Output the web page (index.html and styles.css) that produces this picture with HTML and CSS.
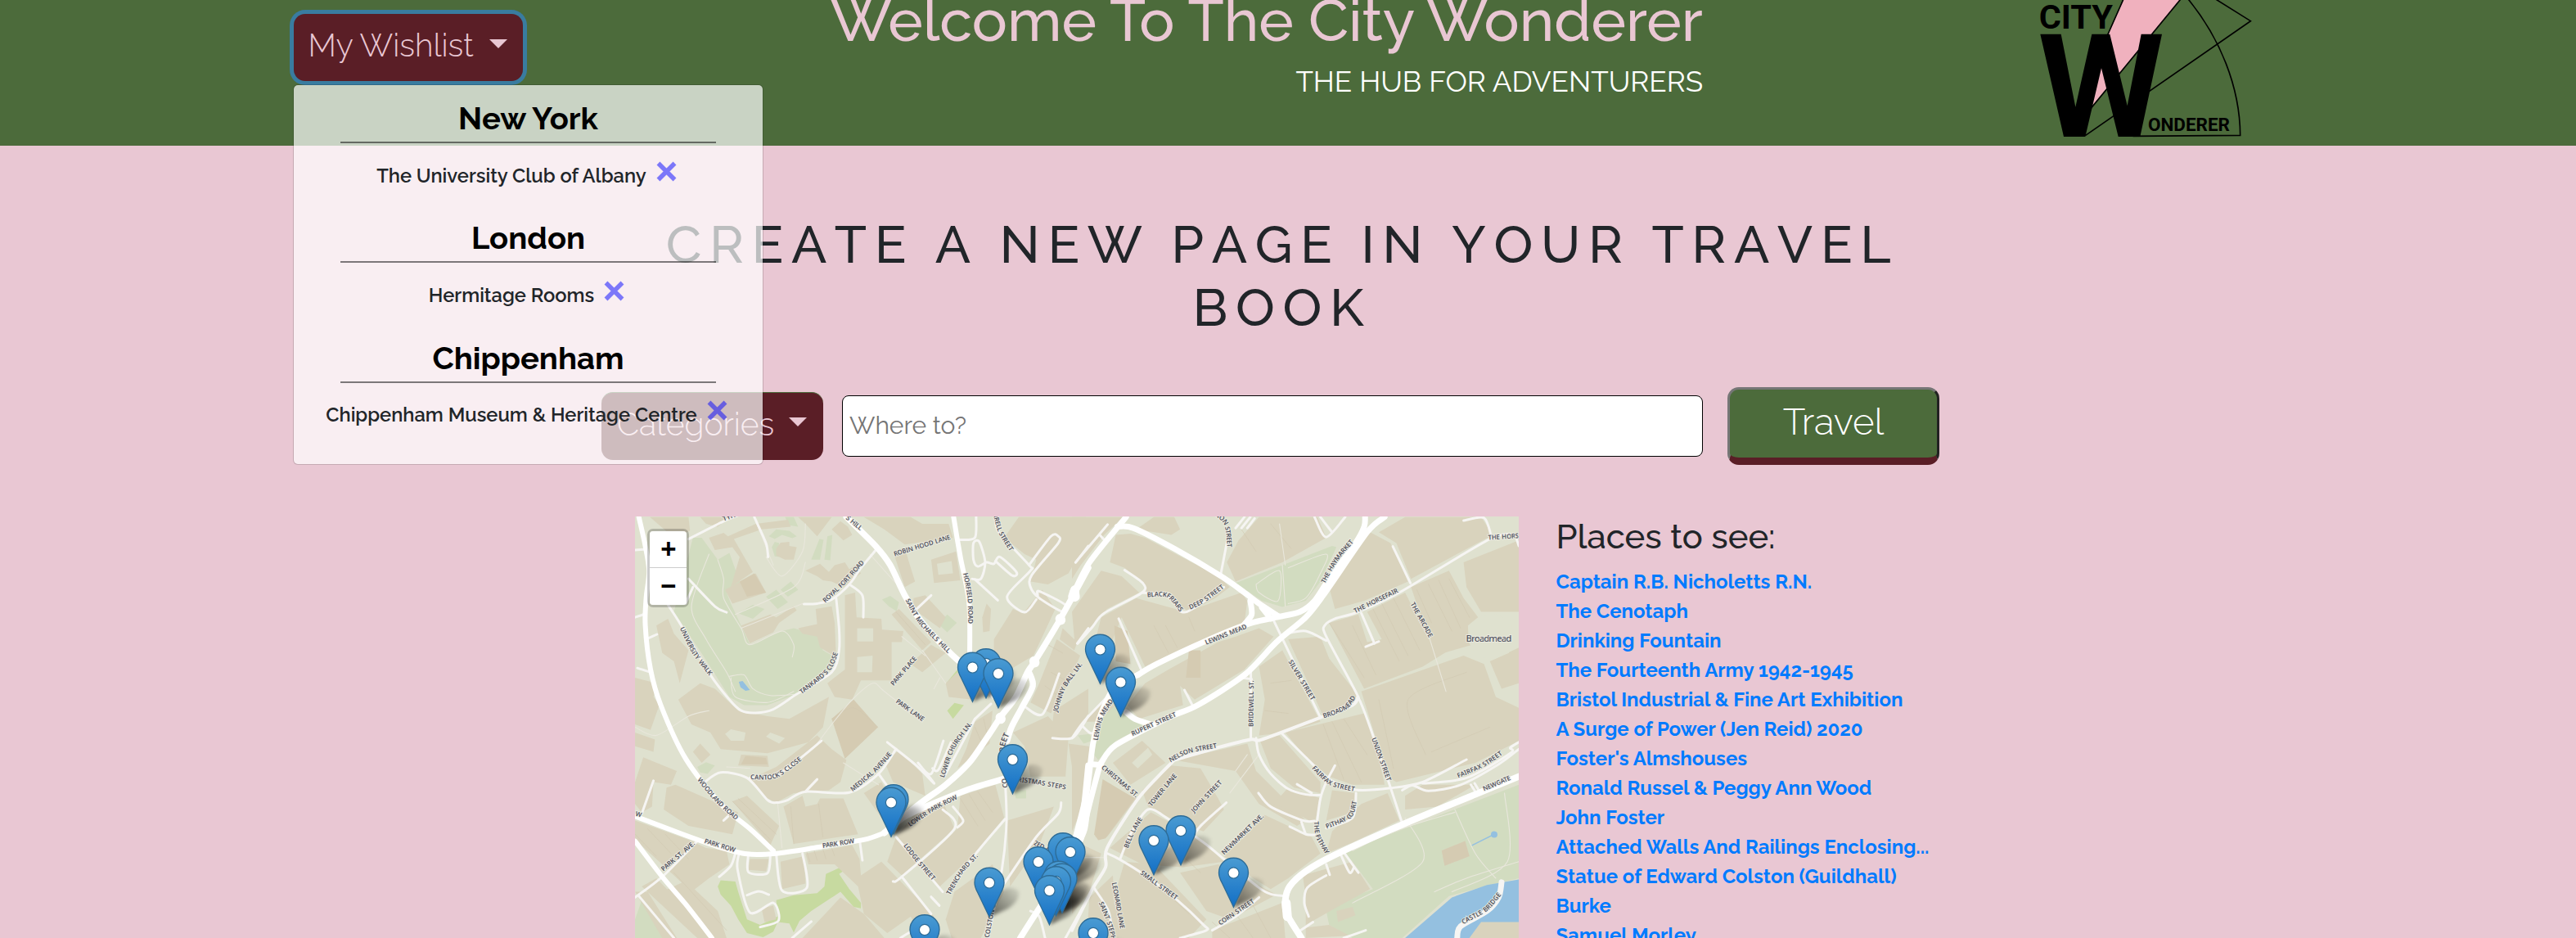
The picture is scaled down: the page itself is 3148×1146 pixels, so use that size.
FILE: index.html
```html
<!DOCTYPE html>
<html lang="en">
<head>
<meta charset="utf-8">
<title>The City Wonderer</title>
<link rel="stylesheet" href="styles.css">
</head>
<body>
<header class="header">
  <div class="wishlist">
    <button class="btn btn-focus">My Wishlist<span class="caret"></span></button>
    <div class="menu">
      <section class="city"><h2>New York</h2><p>The University Club of Albany<svg class="remove" viewBox="0 0 25 25"><path d="M2.5 2.5l20 20M22.5 2.5l-20 20"/></svg></p></section>
      <section class="city"><h2>London</h2><p>Hermitage Rooms<svg class="remove" viewBox="0 0 25 25"><path d="M2.5 2.5l20 20M22.5 2.5l-20 20"/></svg></p></section>
      <section class="city"><h2>Chippenham</h2><p>Chippenham Museum &amp; Heritage Centre<svg class="remove" viewBox="0 0 25 25"><path d="M2.5 2.5l20 20M22.5 2.5l-20 20"/></svg></p></section>
    </div>
  </div>
  <div class="brand">
    <h1>Welcome To The City Wonderer</h1>
    <p>THE HUB FOR ADVENTURERS</p>
  </div>
  <svg class="logo" viewBox="0 0 1020 534">
    <path class="beam" d="M468-10L408 130 340 400 680-10z"/>
    <path class="line" d="M468-10L405 132M682-12L340 404M795-8L931 77 325 497M700-6C820 140 892 320 893 496L500 499"/>
    <path d="M160 125H236L289 392 349 125H415L479 388 530 125H606L526 501H446L384 250 325 501H246z"/>
    <text class="logo-city" x="155" y="106" textLength="271" lengthAdjust="spacingAndGlyphs">CITY</text>
    <text class="logo-rest" x="555" y="479" textLength="300" lengthAdjust="spacingAndGlyphs">ONDERER</text>
  </svg>
</header>
<main>
  <h2 class="title">CREATE A NEW PAGE IN YOUR TRAVEL BOOK</h2>
  <form class="search">
    <button type="button" class="btn btn-cat">Categories<span class="caret"></span></button>
    <input class="where" type="text" placeholder="Where to?">
    <button type="button" class="travel">Travel</button>
  </form>
  <div class="results">
    <div class="map">
      <svg class="tiles" viewBox="0 0 1080 515" width="1080" height="515"></svg>
      <div class="zoom"><span>+</span><span>−</span></div>
    </div>
    <aside class="places">
      <h3>Places to see:</h3>
      <ul>
        <li><a>Captain R.B. Nicholetts R.N.</a></li>
        <li><a>The Cenotaph</a></li>
        <li><a>Drinking Fountain</a></li>
        <li><a>The Fourteenth Army 1942-1945</a></li>
        <li><a>Bristol Industrial &amp; Fine Art Exhibition</a></li>
        <li><a>A Surge of Power (Jen Reid) 2020</a></li>
        <li><a>Foster's Almshouses</a></li>
        <li><a>Ronald Russel &amp; Peggy Ann Wood</a></li>
        <li><a>John Foster</a></li>
        <li><a>Attached Walls And Railings Enclosing...</a></li>
        <li><a>Statue of Edward Colston (Guildhall)</a></li>
        <li><a>Burke</a></li>
        <li><a>Samuel Morley</a></li>
      </ul>
    </aside>
  </div>
</main>
<script src="map.js"></script>
</body>
</html>
```
FILE: styles.css
```css
* { box-sizing: border-box; }
body {
  margin: 0;
  height: 1146px;
  overflow: hidden;
  background: #e9c7d3;
  color: #212529;
  font-family: Raleway, Lato, sans-serif;
}
h1, h2, h3, p, ul { margin: 0; padding: 0; font-weight: 500; }
ul { list-style: none; }

.header {
  display: grid;
  grid-template-columns: 700px 1381px 359px 340px;
  height: 178px;
  background: #4c6b3b;
}
.wishlist { position: relative; padding: 17px 0 0 359px; }
.btn {
  display: flex;
  align-items: center;
  border: 0;
  border-radius: 14px;
  background: #5a1e26;
  color: #e9c7d3;
  font: 300 39px Raleway, Lato, sans-serif;
  white-space: nowrap;
}
.btn-focus {
  width: 280px;
  height: 82px;
  padding: 0 0 6px 17.5px;
  box-shadow: 0 0 0 5px #397ca0;
}
.caret {
  margin: -4px 0 0 19px;
  border: 11px solid transparent;
  border-top-color: #e9c7d3;
  border-bottom: 0;
}
.menu {
  position: absolute;
  z-index: 5;
  top: 103px;
  left: 358px;
  width: 575px;
  height: 465px;
  padding: 18px 57px 0;
  border: 1px solid rgba(0, 0, 0, .15);
  border-radius: 6px;
  background: rgba(255, 255, 255, .7);
  background-clip: padding-box;
}
.city { height: 146.3px; }
.city h2 {
  height: 53px;
  border-bottom: 2px solid rgba(0, 0, 0, .5);
  color: #000;
  font-size: 38.2px;
  font-weight: 700;
  line-height: 46px;
  text-align: center;
}
.city p {
  display: flex;
  justify-content: center;
  margin: 21.5px -50px 0;
  padding-right: 4px;
  font-size: 23.7px;
  font-weight: 600;
  line-height: 36px;
  white-space: nowrap;
}
.remove { width: 25px; height: 25px; margin-left: 12px; }
.remove path { stroke: rgba(0, 0, 255, .5); stroke-width: 5.5; fill: none; }

.brand { text-align: right; white-space: nowrap; }
.brand h1 { margin-top: -18px; color: #e9c7d3; font-size: 72px; line-height: 86px; }
.brand p { margin-top: 5px; color: #fff; font-size: 35.2px; font-weight: 400; line-height: 53px; }

.logo { grid-column: 4; width: 340px; height: 178px; }
.logo .beam { fill: #f0b1be; }
.logo .line { fill: none; stroke: #000; stroke-width: 5; }
.logo text { font-family: Roboto, sans-serif; font-weight: 700; }
.logo-city { font-size: 124px; }
.logo-rest { font-size: 66px; }

.title {
  width: 1640px;
  margin: 81.6px 0 0 747px;
  font-size: 64px;
  font-kerning: none;
  line-height: 77px;
  letter-spacing: 9.6px;
  text-align: center;
}
.search { display: flex; align-items: center; height: 95px; margin: 59.4px 0 0 735px; }
.btn-cat { width: 271px; height: 83px; padding: 0 0 6px 19px; border-top: 1px solid #4c6b3b; }
.btn-cat .caret { margin-left: 18px; }
.where {
  width: 1052px;
  height: 75px;
  margin: 0 30px 0 23px;
  padding: 0 8px 2px;
  border: 1px solid #000;
  border-radius: 8px;
  background: #fff;
  font: 400 30px Raleway, Lato, sans-serif;
}
.where::placeholder { color: #757575; }
.travel {
  width: 259px;
  height: 95px;
  padding: 0 0 4px;
  border: 3px solid;
  border-width: 3px 3px 9px;
  border-color: #767676 #222 #5a1e26 #767676;
  border-radius: 14px;
  background: #4c6b3b;
  color: #fff;
  font: 300 45.5px Raleway, Lato, sans-serif;
}

.results { display: flex; gap: 45.5px; margin: 63px 0 0 776px; }
.map { position: relative; width: 1080px; height: 515px; overflow: hidden; background: #dfe1cf; }
.tiles { display: block; }
.zoom {
  position: absolute;
  top: 15px;
  left: 15px;
  width: 51px;
  border: 3px solid rgba(0, 0, 0, .2);
  border-radius: 7px;
  background-clip: padding-box;
}
.zoom span {
  display: block;
  height: 45px;
  padding: 3px 0 0 1px;
  background: #fff;
  color: #000;
  font: 700 33px/43px "Liberation Mono", monospace;
  text-align: center;
}
.zoom span:first-child { border-bottom: 1px solid #ccc; border-radius: 4px 4px 0 0; }
.zoom span:last-child { border-radius: 0 0 4px 4px; }

.places h3 { margin-bottom: 12px; font-size: 41.8px; font-weight: 500; line-height: 50px; }
.places li { height: 36px; line-height: 36px; white-space: nowrap; }
.places a { color: #007bff; font-size: 23.95px; font-weight: 700; }

.building { fill: #d9d3bd; }
.landmark { fill: #d5cbb2; }
.plain { fill: #dfe1cf; }
.park { fill: #d2dcc0; }
.garden { fill: #c7daa0; }
.water { fill: #94c0e0; }
.road { fill: none; stroke: #fff; stroke-linecap: round; stroke-linejoin: round; }
.street { stroke: #f6f5f3; }
.path { stroke: #e9e7dc; }
.wall { stroke: #d0c8b0; }
.street-name {
  fill: #53545e;
  stroke: #eeede5;
  stroke-width: 2px;
  stroke-opacity: .8;
  paint-order: stroke;
  font: 600 8.6px "Noto Sans", "Open Sans", sans-serif;
  white-space: pre;
}
.district { font-size: 11.5px; font-weight: 500; }
```
FILE: map.js
```js
const svg = document.querySelector('.tiles');
const NS = 'http://www.w3.org/2000/svg';

// Each tile keeps its own grid; project() turns a grid point into map pixels.
const ORIGIN = { w: -6, e: 534 };
const project = (tile, text) => text.trim().split(/\s+/).map(p => {
  const [x, y] = p.split(',').map(Number);
  return [x / 2.8 + ORIGIN[tile], y / 2.981 - 11];
});

function add(name, attrs, parent = svg) {
  const el = document.createElementNS(NS, name);
  for (const key in attrs) el.setAttribute(key, attrs[key]);
  parent.appendChild(el);
  return el;
}
const n = v => v.toFixed(1);
function smooth(pts) {
  let d = `M${n(pts[0][0])} ${n(pts[0][1])}`;
  for (let i = 0; i < pts.length - 1; i++) {
    const a = pts[i - 1] || pts[i], b = pts[i], c = pts[i + 1], e = pts[i + 2] || c;
    const k = 7;
    d += `C${n(b[0] + (c[0] - a[0]) / k)} ${n(b[1] + (c[1] - a[1]) / k)} ${n(c[0] - (e[0] - b[0]) / k)} ${n(c[1] - (e[1] - b[1]) / k)} ${n(c[0])} ${n(c[1])}`;
  }
  return d;
}
const areas = (cls, tile, list) => list.forEach(s =>
  add('polygon', { class: cls, points: project(tile, s).map(p => p.map(n).join()).join(' ') }));
const lines = (cls, width, tile, list) => list.forEach(s =>
  add('path', { class: 'road ' + cls, d: smooth(project(tile, s)), 'stroke-width': width }));

areas('park', 'w', [
  '150,380 215,110 245,110 300,190 340,165 385,300 330,310 345,350 410,500 520,450 560,440 640,465 660,520 700,545 690,580 570,680 470,720 390,720 340,690 250,540',
  '475,105 500,80 545,85 570,105 555,112 520,100 495,115', '485,145 495,125 510,130 505,165 515,180 495,178',
  '620,190 648,115 662,118 650,190', '665,190 675,105 692,100 685,192', '370,385 420,355 460,370 420,405',
  '465,325 500,300 540,345 505,370', '515,300 550,270 575,300 540,325', '862,335 890,322 920,345 912,378 885,360',
  '1055,425 1085,390 1118,420 1085,455', '230,945 260,928 290,940 265,970 240,965', '890,1270 930,1235 975,1280 920,1320',
  '17,1500 40,1430 110,1500 130,1568 17,1568', '530,35 560,35 575,70 545,65', '1315,1030 1355,1030 1355,1060 1320,1060'
]);
areas('garden', 'w', [
  '300,1380 310,1358 360,1362 370,1400 385,1450 400,1500 445,1520 505,1490 500,1430 560,1412 640,1405 665,1380 670,1335 720,1310 775,1275 778,1290 715,1335 750,1390 790,1440 790,1460 765,1455 720,1400 620,1470 580,1505 560,1548 545,1515 505,1510 490,1545 455,1565 400,1550 370,1500 345,1450 310,1410',
  '1082,640 1120,590 1128,630', '1085,740 1110,712 1142,720 1120,750 1105,770'
]);
areas('building', 'w', [
  '68,35 200,35 205,85 150,110 95,60', '240,35 340,35 300,70 260,60',
  '270,110 320,92 335,105 430,60 540,45 550,70 450,80 355,115 420,235 345,290 375,180 350,145 290,155',
  '325,300 430,240 465,310 350,350', '500,150 515,128 545,125 545,140 570,145 560,190 530,190 500,175',
  '575,35 690,35 640,105 600,60', '690,80 720,50 745,70 760,100 730,120',
  '600,230 650,205 680,235 700,210 735,200 750,225 770,210 790,240 730,290 690,270 660,265 640,250',
  '380,430 480,390 500,400 560,360 570,375 510,420 490,455 410,495', '575,440 640,425 635,370 690,360 700,420 705,545 650,510 640,470 590,460',
  '735,320 770,310 775,400 860,405 862,445 935,450 930,490 895,490 895,630 790,630 760,700 700,690 675,640 735,590',
  '800,35 960,35 1000,60 1090,60 1105,110 940,135 870,80', '900,160 940,150 975,270 940,290',
  '1030,190 1115,160 1130,265 1040,275', '970,330 1010,320 1080,400 1060,440 970,370', '895,390 920,370 1030,490 1000,520',
  '1280,110 1330,35 1560,35 1568,110 1500,240 1430,280 1370,270 1390,190 1350,170',
  '1245,480 1310,370 1345,385 1410,300 1455,370 1380,540 1300,590 1245,530', '1205,400 1220,350 1235,370 1230,450 1208,455',
  '960,570 1030,500 1080,530 1000,600', '1080,640 1120,600 1170,700 1090,690',
  '17,620 90,640 80,690 100,720 70,810 17,790', '17,820 85,845 80,890 17,870', '90,430 130,405 150,460 200,520 170,640 150,560 110,530',
  '165,700 240,640 290,660 370,740 470,760 545,770 680,690 660,800 610,855 560,870 470,895 310,880 275,820 210,790',
  '215,890 240,860 275,900 245,930', '380,900 470,905 475,945 370,940',
  '410,990 500,945 640,830 690,880 740,920 720,1000 680,1030 560,1040 500,1075 470,1060',
  '45,910 160,960 140,1010 80,1000 75,1090 40,1110 17,1080 17,1000', '125,1020 155,1010 370,1110 350,1190 200,1160 115,1100',
  '350,1070 400,1050 510,1160 480,1230', '525,1090 590,1050 600,1090 640,1080 650,1060 730,1060 780,1190 560,1225',
  '800,1040 860,1000 910,1100 880,1160', '870,925 920,885 1000,970 1010,1050 900,1000',
  '17,1140 200,1210 260,1240 330,1250 340,1300 270,1350 210,1400 100,1290 17,1210',
  '110,1400 190,1360 300,1470 330,1568 240,1568', '40,1380 90,1350 290,1568 230,1568', '17,1400 60,1400 160,1568 110,1568',
  '515,1290 595,1270 600,1370 520,1390', '410,1280 475,1280 465,1325 405,1320', '450,1460 490,1450 500,1500 460,1510',
  '600,1260 760,1230 785,1280 790,1340 860,1290 980,1420 1040,1490 1000,1568 960,1490 880,1550 800,1480 780,1380 700,1300 610,1300',
  '970,1120 1070,1070 1110,1170 930,1340 880,1290 910,1200', '1080,1500 1110,1400 1240,1300 1280,1400 1200,1568 1100,1568',
  '590,1568 720,1420 800,1480 870,1568', '1130,1050 1250,1010 1280,1130 1170,1270 1060,1380 990,1300 1120,1170',
  '1290,1140 1450,1090 1400,1230 1300,1380', '1180,780 1240,740 1230,860 1120,950 1150,880', '1310,820 1430,760 1500,840 1490,980 1370,980 1350,870',
  '1400,640 1460,480 1540,540 1500,640 1440,750 1370,710', '1450,740 1568,660 1568,750 1510,840 1440,840', '1500,860 1568,870 1568,1060 1520,1000',
  '1470,480 1480,440 1530,490 1520,520'
]);
areas('landmark', 'w', ['375,270 425,240 465,310 400,325', '690,770 765,700 848,800 735,915', '395,905 465,912 470,935 380,935']);
areas('plain', 'w', ['777,440 832,440 832,488 777,488', '777,545 830,540 828,600 777,600', '325,825 345,808 395,820 390,850 345,850', '465,835 480,820 530,840 510,860', '1050,205 1100,195 1105,240 1055,245']);
areas('water', 'w', ['372,635 385,632 410,665 395,668 378,655']);

areas('park', 'e', [
  '560,275 720,210 890,140 905,145 850,270 800,340 720,362 650,340', '95,780 150,690 200,760 260,790 150,850 90,920 75,900',
  '930,1255 1529,1010 1529,1350 1430,1375 1290,1415 1130,1568 960,1568 880,1520 870,1470 930,1440 980,1410 1030,1390 960,1290', '20,830 60,825 70,850 40,860'
]);
areas('water', 'e', ['1140,1568 1300,1420 1420,1375 1529,1355 1529,1568']);
areas('building', 'e', [
  '0,35 175,35 110,100 30,210 0,260', '200,95 250,110 500,250 540,290 490,330 400,380 330,330 260,320 240,270 180,220 130,200 150,100',
  '220,80 280,35 350,35 370,80 340,100', '570,120 640,35 840,35 870,110 720,200 560,270 530,200',
  '870,250 1020,90 1090,130 1150,270 1000,340 900,370', '1050,90 1140,35 1400,35 1440,100 1160,260 1110,130',
  '880,420 980,390 1010,490 1060,480 1010,380 1140,310 1220,480 1290,520 1200,580 1000,660',
  '1160,290 1290,230 1340,330 1390,400 1370,500 1240,540', '1340,200 1529,120 1529,380 1400,380 1350,290',
  '990,670 1340,540 1410,570 1450,690 1529,730 1529,850 1380,930 1110,1000 1080,980', '1430,560 1529,510 1529,640 1470,660',
  '0,380 100,230 170,250 230,310 120,370 50,450 10,500', '100,400 220,330 270,345 390,380 580,310 600,340 590,420 400,510 250,580 170,400 110,560 60,570',
  '330,590 500,490 560,470 640,440 690,470 590,590 420,700 370,650 380,720 230,770 190,720 250,640',
  '40,780 130,680 150,720 90,780', '640,580 720,520 850,780 730,820 640,830 660,700', '740,480 850,470 880,550 990,700 860,760',
  '730,820 1000,750 1040,860 1070,1010 960,1010 880,980 800,910', '640,840 710,830 850,1000 850,1040 760,1020 680,950',
  '140,930 240,850 320,930 200,1010', '105,1000 220,1060 120,1200 80,1200', '240,1030 340,940 440,950 500,1060 520,1100 450,1180 370,1150 260,1090',
  '350,920 600,860 630,960 800,1140 770,1160 640,1080 560,960', '690,1080 740,1100 830,1150 850,1060 740,1020', '870,1140 890,1030 970,1040 960,1110',
  '890,1180 990,1080 1080,1040 1120,1140 960,1220 870,1260', '130,1240 270,1110 430,1200 520,1290 380,1310 240,1300',
  '180,1290 280,1300 460,1500 400,1568 130,1568 150,1400', '370,1330 500,1300 700,1410 540,1500 460,1470', '520,1270 660,1120 820,1200 850,1260 740,1350 680,1390 620,1350',
  '480,1540 720,1440 730,1568 480,1568', '0,880 60,870 50,1060 0,1180', '0,1210 100,1260 60,1400 0,1480', '60,1420 140,1340 150,1568 50,1568',
  '790,1340 960,1290 1020,1390 900,1460 800,1520 800,1420', '1140,1050 1200,1010 1380,1010 1250,1090 1140,1100', '800,1530 880,1520 950,1560 800,1568',
  '1360,1568 1400,1510 1529,1510 1529,1568', '905,1470 960,1455 970,1485 910,1510', '1265,1250 1345,1215 1360,1270 1275,1305'
]);
areas('landmark', 'e', ['105,990 215,1060 115,1205 90,1212 76,1190', '145,430 190,450 200,570 150,560', '400,520 440,520 440,620 390,620', '1265,1250 1345,1215 1360,1270 1275,1305']);
areas('plain', 'e', ['205,930 260,875 275,900 225,950', '1355,430 1395,395 1450,390 1500,410 1512,470 1495,530 1440,555 1385,540 1357,490']);

lines('wall', .6, 'w', ['350,1070 480,1210', '370,1060 500,1190', '17,1190 90,1270', '60,1170 140,1260', '120,1190 200,1280', '615,1290 605,1255', '640,1285 630,1250', '670,1280 660,1245', '700,1270 690,1240', '150,1330 330,1540', '690,770 765,730 848,800', '550,1090 560,1225', '645,1080 660,1200', '1130,1060 1190,1160', '1160,1045 1215,1140', '1190,1035 1240,1110', '1180,800 1200,850', '1210,770 1220,820', '910,380 1010,500', '1430,500 1480,530', '1440,600 1490,630', '1420,650 1470,690']);
lines('wall', .6, 'e', ['1180,300 1230,420', '1220,280 1300,450', '1255,265 1330,440', '1290,260 1360,400', '1000,620 880,420', '1040,610 960,430', '1120,560 1030,370', '1150,540 1060,350', '1190,520 1100,330', '1100,950 1050,700', '1210,900 1150,700 1350,600', '1230,890 1430,800', '400,400 420,450', '280,430 330,530', '320,430 360,510', '680,640 750,630', '660,740 740,750', '860,790 930,990', '890,780 990,1000', '930,770 1010,900', '480,1510 540,1568', '560,1480 620,1568', '620,1450 680,1568', '580,80 630,160', '680,60 750,150', '350,1240 440,1330', '260,1340 400,1480']);
lines('path', 1.1, 'w', [
  '270,170 210,360 260,480 330,600 360,670', '300,190 320,260 320,330 380,440 410,500 520,450 560,500 555,545', '465,180 520,250 590,160 600,60',
  '380,440 590,350', '360,390 560,290 600,200', '340,615 390,610 420,660 480,685 570,680', '345,620 360,690 470,710 560,670', '820,170 930,300',
  '430,50 490,210', '930,470 1010,540', '640,860 690,790 760,700 830,640 870,670 1000,780', '730,930 850,1010', '330,945 410,950', '17,800 90,830 200,760 270,740', '505,1080 520,1240', '1040,660 1060,620', '1000,520 1080,640'
]);
lines('path', 1.1, 'e', ['720,210 730,360', '740,220 870,170 850,240 800,330 740,350', '630,280 710,230 705,340 640,310 630,280', '710,60 730,210', '1140,1130 1200,1290 960,1440', '1310,1100 1380,1260 1450,1350', '1480,1040 1490,1290 1300,1400', '1210,430 1280,670', '640,900 540,1040', '0,1275 120,1275', '960,1250 1100,1180 1310,1110', '560,960 600,900', '1529,1290 1350,1350 1240,1400']);
lines('street', 3, 'w', [
  '200,115 320,50 380,25', '425,35 465,130 472,180', '200,260 290,360 330,382', '215,290 190,350', '845,150 790,220 750,280 690,335 640,350 595,352',
  '705,330 715,440 715,520 690,600 570,680 490,735 430,748 380,740 340,700 275,610 175,430 130,355', '750,280 795,320 798,400',
  '1184,35 1180,110 1130,118', '975,375 1030,320', '1170,260 1200,260 1215,200 1195,125 1175,130 1175,190 1190,215 1220,200 1245,205 1265,180 1322,235 1308,248 1250,195',
  '1180,262 1258,338', '1250,35 1262,90 1365,210 1370,230 1290,325 1350,382 1390,335', '1365,210 1440,105 1465,105 1465,130 1375,245 1370,290 1400,330 1480,380 1490,355 1400,305 1395,320',
  '17,155 55,152', '17,400 50,388', '65,475 92,462', '25,585 70,600', '880,855 980,940 1040,1005 1015,970', '985,930 1030,970 1072,850', '1035,950 1055,955 1098,855',
  '655,850 510,970 410,985', '255,1000 310,965 400,985 470,1065 500,1075 540,1065 600,1035 750,1038 850,970 910,880', '600,1035 640,990', '850,970 890,1030', '40,1115 80,995', '320,1140 335,1125',
  '360,1260 345,1305 305,1345', '372,1262 368,1320 410,1475 490,1440 508,1505 445,1528', '405,1262 405,1328 470,1332 480,1265', '500,1262 520,1395 605,1385 590,1260', '400,1412 440,1398 475,1410', '785,1210 795,1285',
  '910,1200 1070,1400', '1105,1090 1140,1140 1120,1165', '1070,1100 1110,1170 930,1345 900,1362', '930,1345 1030,1480', '1030,1418 1058,1450', '1180,770 1235,715', '1075,980 1180,770',
  '1283,1135 1180,1265 1090,1400', '1475,1075 1465,1115 1390,1200 1280,1370', '1283,990 1288,1150 1272,1320 1225,1568', '17,1420 110,1345 230,1215', '30,1415 150,1568', '555,1568 620,1508', '1370,1470 1400,1490 1420,1568',
  '1350,725 1412,752 1468,605', '1530,495 1568,440', '1525,200 1568,140', '1445,840 1515,838 1568,760', '1490,1568 1568,1420', '925,1568 960,1545'
]);
lines('street', 3, 'e', [
  '12,200 122,62', '95,100 108,115', '180,228 242,275 240,310 110,385 70,435 20,495', '240,310 330,325 375,380 420,365 520,290', '535,100 508,250', '160,405 240,598', '385,665 412,720',
  '560,75 590,35', '580,75 610,35', '600,75 625,40', '830,35 870,108 935,35', '850,35 890,90', '1098,142 1158,275', '990,385 1035,495', '1005,507 1050,488', '1340,48 1410,38 1435,105', '1520,110 1529,140',
  '685,400 850,765', '612,590 612,840', '575,620 615,625', '1130,1150 1090,1020 1020,800 975,680 870,470 865,430 900,405 980,380 1120,310 1430,115 1529,100',
  '730,460 800,450 870,485', '165,1280 200,1190 260,1100 330,1135 450,1220 530,1290 640,1385 680,1408 725,1415', '120,1260 160,1280 250,1340 360,1430 450,1520 460,1540 370,1568',
  '720,825 800,910 880,990 970,1028 1090,1022 1200,1000 1350,918', '630,840 640,900 680,970 740,1025 800,1045 850,1048', '770,1008 820,1040', '900,940 870,1000 850,1060 838,1150', '638,1040 680,1090 790,1140 830,1142',
  '745,1162 800,1190 830,1192', '785,1145 798,1185', '870,1168 960,1130 972,1040', '528,1075 440,1160 400,1220', '0,840 40,780 120,690', '35,795 60,820 80,822', '870,1300 882,1338', '930,1255 980,1330', '920,1265 950,1330 965,1310',
  '870,1340 805,1385 795,1440 810,1490', '930,1568 1005,1540', '775,1545 825,1510', '1130,1030 1165,1012 1220,1032 1330,1010 1460,935 1529,880', '1200,1005 1350,985 1500,895 1500,875 1529,855', '1365,1010 1380,1035', '1378,1005 1392,1030', '75,1385 125,1470 140,1568', '480,1540 560,1490 640,1420'
]);
lines('street', 4, 'e', ['350,920 480,880 610,845 650,845 850,765 960,720 978,690', '350,920 290,985 220,1070 120,1240 115,1310 70,1390 0,1540']);
lines('street', 7, 'e', ['1318,1568 1330,1525 1420,1470 1460,1420 1470,1365']);
lines('', 6, 'w', ['30,35 50,130 65,230 55,330 52,430 70,590 105,720 190,915 310,1080 410,1170 490,1250', '1107,35 1130,180 1160,350 1162,560',
  '17,1215 110,1345 190,1445 280,1568', '17,1125 180,1190 300,1235 400,1262 500,1260 640,1238 800,1210 870,1185']);
lines('', 7.5, 'w', ['740,35 840,140 890,210 940,320 1000,420 1100,535 1170,600 1250,690', '870,1185 990,1080 1080,1010 1160,930 1220,840 1270,760 1320,690 1360,600 1385,560 1470,410 1568,220',
  '1365,600 1378,650 1340,730 1305,800 1290,850', '870,1185 950,1120 1150,1030 1290,985', '1335,1568 1400,1460 1470,1350', '1568,940 1545,1150 1500,1290', '1568,1060 1555,1170 1530,1230']);
lines('', 7, 'e', ['0,325 60,200 185,35', '155,70 210,75 350,150 510,250 590,310 640,350 705,395', '610,340 615,390 590,425', '650,365 680,405',
  '225,610 290,570 450,490 600,425 700,400 780,380 830,340 880,260 970,130 1000,70 1003,35', '100,930 150,865 330,765 430,720 590,610 700,490 800,400 860,320 1010,90 1070,35',
  '10,1210 50,1040 72,860 100,750 150,650 225,610', '30,1210 60,1080 90,960 100,930', '185,745 215,770 270,790', '70,935 100,938']);
lines('', 8, 'e', ['1529,980 1380,1045 1130,1155 900,1265 800,1325 745,1380 730,1430 735,1480 785,1568']);
lines('', 12, 'w', ['1520,310 1522,325', '1472,405 1473,410', '1383,560 1384,565', '1267,765 1268,770']);
lines('', 11, 'e', ['10,300 2,325', '733,1440 737,1490']);
lines('fountain', 1.6, 'e', ['1370,1230 1445,1190']);
svg.lastChild.style.stroke = '#94c0e0';
add('circle', { cx: 1050, cy: 388.5, r: 4, fill: '#94c0e0' });

const names = {
  w: [['TYNDALL', '320,50 420,10'], ["S HILL", '738,42 785,82'], ['ROBIN HOOD LANE', '905,178 1098,115'], ['ROYAL FORT ROAD', '668,348 735,280 803,200'], ['RRELL STREET', '1242,25 1262,95 1300,160'],
    ['HORFIELD ROAD', '1140,240 1155,330 1157,425'], ['SAINT MICHAELS HILL', '942,338 990,425 1088,532'], ['UNIVERSITY WALK', '170,440 215,535 272,615'], ["TANKARD'S CLOSE", '588,680 680,600 713,528'],
    ['PARK PLACE', '902,650 983,550'], ['PARK LANE', '908,710 1000,780'], ['JOHNNY BALL LN.', '1462,745 1490,660 1548,572'], ['LOWER CHURCH LN.', '1075,985 1110,880 1170,790'], ['MEDICAL AVENUE', '762,1035 840,965 897,898'],
    ["CANTOCK'S CLOSE", '412,990 500,985 590,918'], ['WOODLAND ROAD', '230,992 290,1070 362,1140'], ['LOWER PARK ROW', '958,1163 1040,1105 1122,1060'], ['CHRISTMAS STEPS', '1295,995 1390,1008 1492,1028'], ['STREET', '1290,920 1283,870 1298,825'],
    ['PARK ROW', '253,1222 358,1256'], ['PARK ROW', '660,1240 768,1222'], ['PARK ST. AVE.', '115,1325 225,1225'], ['LODGE STREET', '935,1232 985,1300 1035,1360'], ['TRENCHARD ST.', '1095,1412 1140,1330 1192,1270'], ['ZED ALLEY', '1380,1228 1470,1275'],
    ['COLSTON STREET', '1228,1568 1262,1380'], ['W', '17,1122 30,1126'], ['CO', '1292,1020 1288,985']],
  e: [['UNION STREET', '470,15 520,60 532,145'], ['BLACKFRIARS', '258,326 325,328 370,382'], ['DEEP STREET', '405,372 455,345 522,292'], ['LEWINS MEAD', '460,500 600,440'], ['THE HAYMARKET', '865,278 910,195 965,125'], ['THE HORSEFAIR', '970,385 1118,308'], ['THE HORSE', '1425,118 1540,110'],
    ['THE ARCADE', '1158,352 1222,475'], ['SILVER STREET', '740,562 820,705'], ['BRIDEWELL ST.', '620,798 622,628'], ['BROADMEAD', '862,768 940,735 972,690'], ['UNION STREET', '1025,842 1078,998'], ['FAIRFAX STREET', '820,950 880,1010 968,1035'],
    ['FAIRFAX STREET', '1322,985 1410,945 1475,898'], ['NEWGATE', '1410,1033 1505,990'], ['PITHAY COURT', '872,1170 955,1130 975,1068'], ['THE PITHAY', '828,1145 835,1200 868,1265'], ['NELSON STREET', '338,928 400,895 497,875'], ['RUPERT STREET', '208,832 358,760'],
    ['LEWINS MEAD', '88,850 105,770 142,705'], ['CHRISTMAS ST.', '100,950 220,1058'], ['TOWER LANE', '272,1090 360,978'], ['JOHN STREET', '418,1112 515,1003'], ['BELL LANE', '192,1242 212,1190 242,1135'], ['NEWMARKET AVE.', '522,1265 658,1125'],
    ['SMALL STREET', '233,1335 355,1430'], ['CORN STREET', '508,1522 625,1438'], ['LEONARD LANE', '137,1368 165,1535'], ['SAINT STEPHENS', '92,1440 125,1530 145,1620'], ['CASTLE BRIDGE', '1338,1518 1420,1470 1470,1410']]
};
// Lay each name along its track one glyph at a time, condensed to fit the track.
const ruler = document.createElement('canvas').getContext('2d');
ruler.font = '600 10px "Noto Sans", "Open Sans", sans-serif';
for (const tile in names) for (const [label, track] of names[tile]) {
  const path = add('path', { d: smooth(project(tile, track)), fill: 'none' });
  const length = path.getTotalLength();
  const widths = [...label].map(c => ruler.measureText(c).width + (c === ' ' ? 1 : .3));
  const total = widths.reduce((a, b) => a + b, 0);
  const k = length / total;
  const id = 'track-' + svg.childElementCount;
  path.id = id;
  const size = Math.min(10, Math.max(8, 10 * k * 1.06));
  const text = add('text', { class: 'street-name', 'font-size': size });
  text.style.fontSize = size + 'px';
  const natural = total * size / 10;
  const run = add('textPath', { href: '#' + id }, text);
  run.textContent = label;
  text.style.letterSpacing = ((length - natural) / label.length + .15).toFixed(2) + 'px';
  text.style.wordSpacing = '1px';
}
add('text', { class: 'street-name district', x: 1015.5, y: 153, textLength: 56 }).textContent = 'Broadmead';

const defs = add('defs', {});
defs.innerHTML = `<linearGradient id="pin" x1="0" y1="0" x2="0" y2="1"><stop offset="0" stop-color="#4a9bd2"/><stop offset="1" stop-color="#126fc6"/></linearGradient>
<linearGradient id="shade" x1="0" y1="1" x2="1" y2="0"><stop offset="0" stop-opacity=".6"/><stop offset="1" stop-opacity=".05"/></linearGradient>
<filter id="soft" x="-30%" y="-30%" width="160%" height="160%"><feGaussianBlur stdDeviation="2"/></filter>`;
// Pin tips, in map pixels.
const pins = [[429, 222], [412.5, 226.5], [444, 234], [568.5, 204.5], [593.5, 244.5], [461.5, 339], [316, 388], [313, 391.5], [433, 489.5], [523, 447], [532, 452], [493, 464],
  [518, 481.5], [522, 484.5], [514.5, 488], [506.5, 499], [634, 438], [667, 426], [731.5, 477.5], [354, 547], [560, 551]].sort((a, b) => a[1] - b[1]);
for (const [x, y] of pins) add('path', { d: `M${x} ${y}L${x + 9} ${y - 27}Q${x + 22} ${y - 42} ${x + 36} ${y - 32}Q${x + 38} ${y - 20} ${x + 22} ${y - 10}z`, fill: 'url(#shade)', filter: 'url(#soft)' });
for (const [x, y] of pins) {
  const g = add('g', { transform: `translate(${x - 18.75} ${y - 61}) scale(1.5)` });
  add('path', { d: 'M12.5.5C5.8.5.5 5.9.5 12.5c0 3 1 5.4 2.6 8.3L12.5 40.5l9.4-19.7c1.6-2.9 2.6-5.3 2.6-8.3C24.5 5.9 19.2.5 12.5.5z', fill: 'url(#pin)', stroke: '#2e6c97', 'stroke-width': .9 }, g);
  add('circle', { cx: 12.5, cy: 12.7, r: 4.4, fill: '#fff', stroke: '#2e6c97', 'stroke-width': .8 }, g);
}
```
